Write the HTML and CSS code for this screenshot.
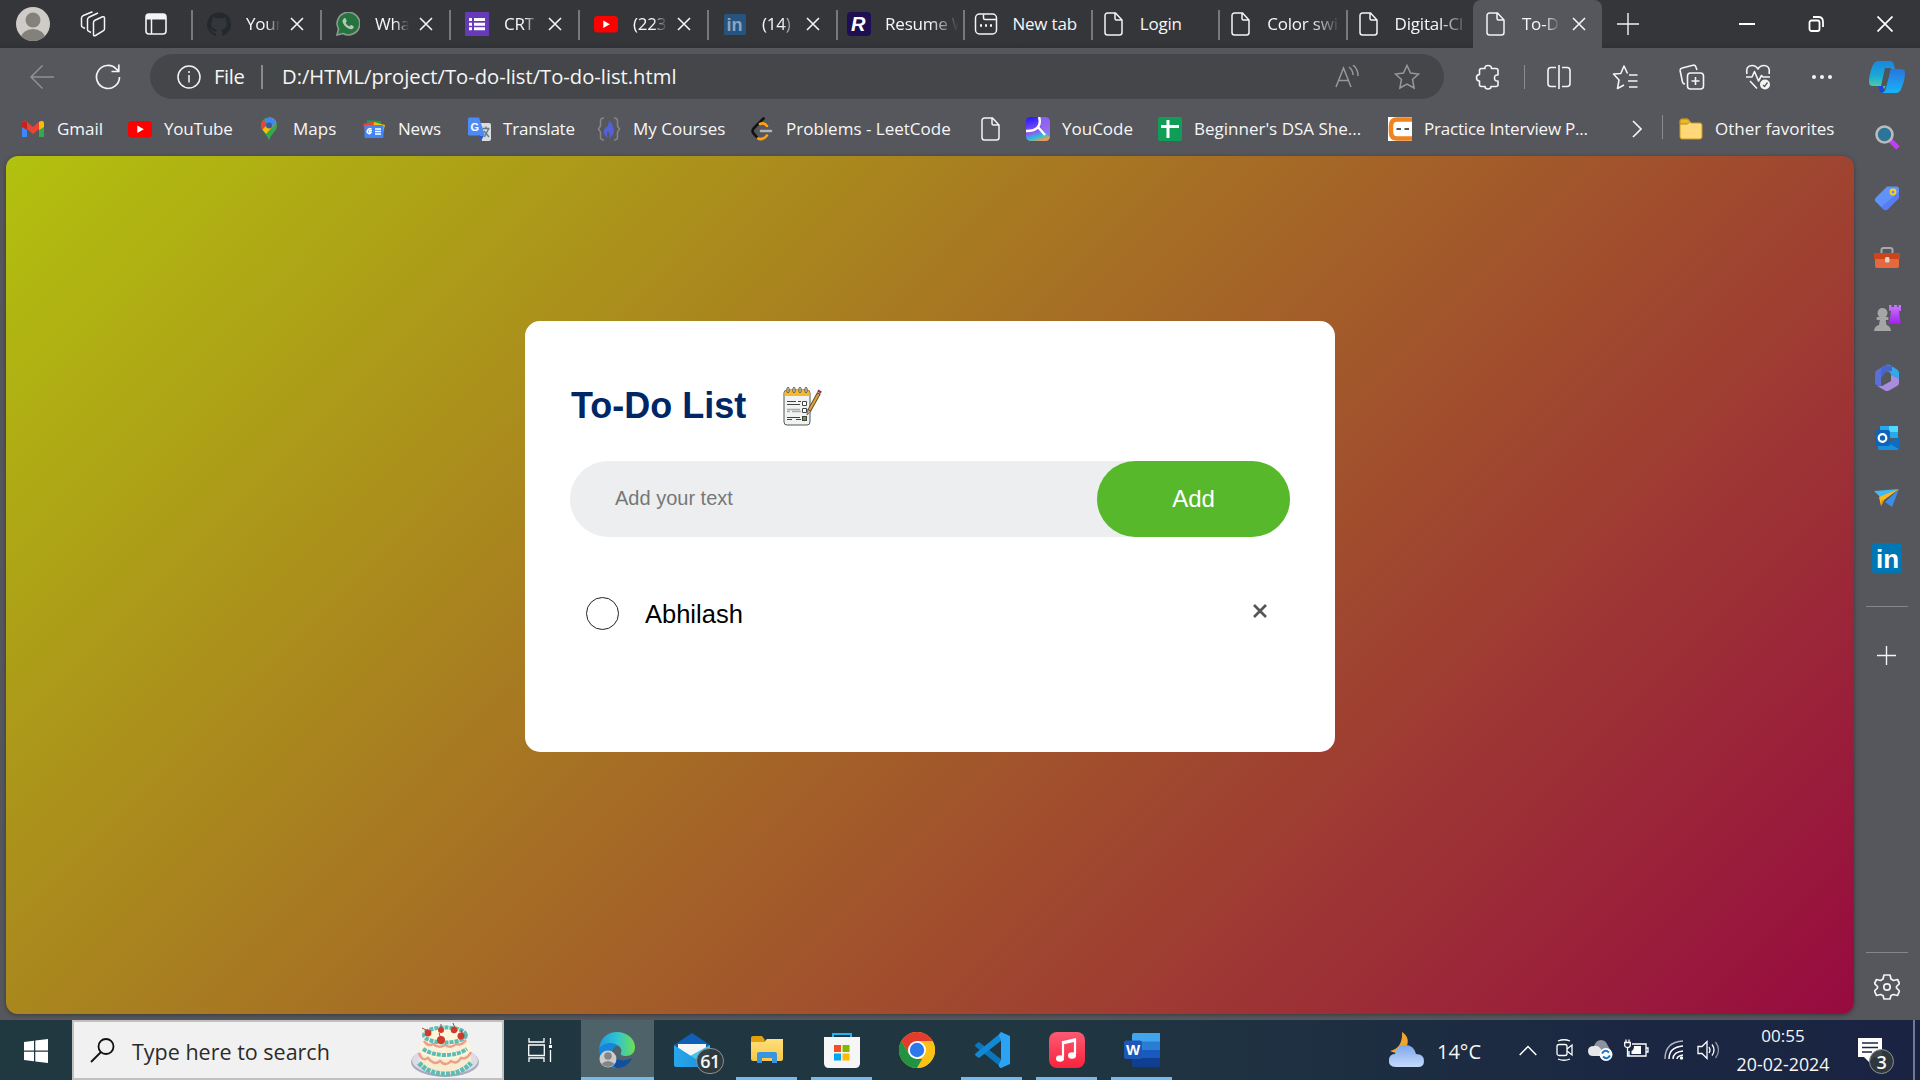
FILE: index.html
```
<!DOCTYPE html>
<html lang="en">
<head>
<meta charset="utf-8">
<title>To-Do List</title>
<link rel="stylesheet" href="styles.css">
</head>
<body>
<svg class="defs" width="0" height="0">
  <defs>
    <symbol id="x" viewBox="0 0 14 14"><path d="M1 1l12 12M13 1L1 13" fill="none" stroke="#f4f4f4" stroke-width="1.6"/></symbol>
    <symbol id="doc" viewBox="0 0 24 24"><path d="M5.500 1h8L20 8v12.500a2.500 2.500 0 0 1-2.500 2.500h-12A2.500 2.500 0 0 1 3 20.500v-17A2.500 2.500 0 0 1 5.500 1zM13 1v5.500A1.500 1.500 0 0 0 14.500 8H20" fill="none" stroke="#f4f4f4" stroke-width="1.500"/></symbol>
    <symbol id="yt" viewBox="0 0 24 24"><rect y="4" width="24" height="16.500" rx="3.500" fill="#f00"/><path d="M9.300 8.500v7.500l6.500-3.700z" fill="#fff"/></symbol>
    <linearGradient id="gEdge" x1="0" x2="1"><stop offset="0" stop-color="#2099dc"/><stop offset=".5" stop-color="#2fc3d4"/><stop offset="1" stop-color="#6ee04c"/></linearGradient>
    <linearGradient id="gCopA" x1="0" y1="0" x2="0" y2="1"><stop offset="0" stop-color="#1b86e0"/><stop offset=".5" stop-color="#18a8d8"/><stop offset="1" stop-color="#5ed88f"/></linearGradient>
    <linearGradient id="gCopB" x1="0" y1="0" x2="0" y2="1"><stop offset="0" stop-color="#2b74dc"/><stop offset="1" stop-color="#15b4fb"/></linearGradient>
    <linearGradient id="gYou" x1=".3" y1="0" x2=".6" y2="1"><stop offset="0" stop-color="#2c1cff"/><stop offset=".6" stop-color="#8b5cf0"/><stop offset=".8" stop-color="#25bfe0"/><stop offset="1" stop-color="#f09a50"/></linearGradient>
    <linearGradient id="gCloud" x1="0" y1="0" x2="0" y2="1"><stop offset="0" stop-color="#7ea6ea"/><stop offset="1" stop-color="#c5dafc"/></linearGradient>
    <linearGradient id="gMusic" x1="0" y1="0" x2="0" y2="1"><stop offset="0" stop-color="#fb5a74"/><stop offset="1" stop-color="#fa233b"/></linearGradient>
    <linearGradient id="gMail" x1="0" x2="1"><stop offset="0" stop-color="#29a7ea"/><stop offset="1" stop-color="#1b8fe0"/></linearGradient>
    <linearGradient id="gPurple" x1="0" y1="0" x2="0" y2="1"><stop offset="0" stop-color="#c77bf5"/><stop offset="1" stop-color="#a41cf0"/></linearGradient>
    <linearGradient id="gFold" x1="0" y1="0" x2="0" y2="1"><stop offset="0" stop-color="#ffe07a"/><stop offset="1" stop-color="#f8c747"/></linearGradient>
  </defs>
</svg>

<header class="tabstrip">
  <svg class="avatar" width="34" height="34" viewBox="0 0 34 34"><defs><clipPath id="cAv"><circle cx="17" cy="17" r="17"/></clipPath></defs><g clip-path="url(#cAv)"><rect width="34" height="34" fill="#cfccc8"/><circle cx="17" cy="13" r="7.500" fill="#84807c"/><ellipse cx="17" cy="31" rx="12" ry="9" fill="#84807c"/></g></svg>
  <svg class="workspaces" width="26" height="26" viewBox="0 0 26 26" fill="none" stroke="#f4f4f4" stroke-width="1.500" stroke-linejoin="round"><path d="M13.500 11.500q0-1.500 1.500-2.200l7.500-3.500q2-.6 2 1.500v10.500q0 1.300-1 1.800l-8 4.900q-2 1-2-1zM11 21.500l-2.500-1.300q-1-.5-1-1.700V8.500q0-1.500 1.300-2.200L18 2M5 17.500l-2.500-1.300q-1-.5-1-1.700V7q0-1.500 1.300-2.200L12.500.8"/></svg>
  <svg class="vtabs" width="22" height="22" viewBox="0 0 22 22"><rect x="1" y="1" width="20" height="20" rx="3" fill="none" stroke="#f4f4f4" stroke-width="1.600"/><path d="M1 6.500V4a3 3 0 0 1 3-3h14a3 3 0 0 1 3 3v2.500z" fill="#f4f4f4"/><path d="M6.500 6v15" stroke="#f4f4f4" stroke-width="1.500"/></svg>
  <nav class="tabs">
    <div class="tab"><svg class="fav" viewBox="0 0 24 24"><path fill="#24292e" d="M12 .3a12 12 0 0 0-3.800 23.400c.6.100.8-.3.800-.6v-2c-3.300.7-4-1.600-4-1.600-.6-1.400-1.400-1.800-1.400-1.800-1-.7.100-.7.100-.7 1.200 0 1.900 1.200 1.900 1.200 1 1.800 2.800 1.300 3.500 1 0-.8.400-1.300.7-1.600-2.700-.3-5.500-1.300-5.500-6 0-1.200.5-2.300 1.300-3.100-.2-.4-.6-1.600 0-3.200 0 0 1-.3 3.400 1.200a11.500 11.500 0 0 1 6 0c2.300-1.500 3.300-1.200 3.300-1.200.7 1.600.2 2.800.1 3.200.8.800 1.300 1.900 1.300 3.200 0 4.600-2.800 5.600-5.500 5.900.5.400.9 1 .9 2.200v3.300c0 .3.100.7.800.6A12 12 0 0 0 12 .3"/></svg><span class="label">Your s</span><svg class="close"><use href="#x"/></svg></div>
    <div class="tab"><svg class="fav" viewBox="0 0 24 24"><path d="M1 23l1.500-6A11.300 11.300 0 1 1 7 21.500z" fill="#23743d" stroke="#8b9a8d" stroke-width="1.600"/><path d="M8 6.500c1-.8 1.600-.3 2 .8l.7 1.700c.2.700-1 1.500-.9 1.900.8 1.700 2 2.700 3.700 3.400.5.100 1.100-1.500 1.800-1.200l2.200 1.100c.8.500-.2 2.800-2 3-3 .4-8.600-4-9-8 0-1.200.7-2 1.500-2.700z" fill="#b9c4bb"/></svg><span class="label">What</span><svg class="close"><use href="#x"/></svg></div>
    <div class="tab"><svg class="fav" viewBox="0 0 24 24"><rect width="24" height="24" rx="1" fill="#673ab7"/><path d="M4 6h3v3H4zM9 6h11v3H9zM4 10.700h3v3H4zM9 10.700h11v3H9zM4 15.300h3v3H4zM9 15.300h11v3H9z" fill="#fff"/></svg><span class="label">CRT P</span><svg class="close"><use href="#x"/></svg></div>
    <div class="tab"><svg class="fav"><use href="#yt"/></svg><span class="label">(223)</span><svg class="close"><use href="#x"/></svg></div>
    <div class="tab"><svg class="fav" viewBox="0 0 24 24"><rect x="1" y="2" width="22" height="21" rx="1.500" fill="#27537f"/><text x="3.500" y="19" class="lin" font-size="18" fill="#8ba6be">in</text></svg><span class="label">(14)</span><svg class="close"><use href="#x"/></svg></div>
    <div class="tab slim"><svg class="fav" viewBox="0 0 24 24"><rect width="24" height="24" rx="4" fill="#1d0f52"/><text x="4" y="19" font-size="20" font-weight="bold" font-style="italic" fill="#fff" class="lin">R</text></svg><span class="label">Resume W</span></div>
    <div class="tab slim"><svg class="fav" viewBox="0 0 24 24" fill="none" stroke="#f4f4f4" stroke-width="1.500"><rect x="1.500" y="2" width="21" height="20" rx="4"/><path d="M9.500 2.500V6Q9.500 7.500 11 7.500h11"/><path d="M6 13.500h2M11 13.500h2M16 13.500h2" stroke-width="2.400"/></svg><span class="label nofade">New tab</span></div>
    <div class="tab slim"><svg class="fav"><use href="#doc"/></svg><span class="label nofade">Login</span></div>
    <div class="tab slim"><svg class="fav"><use href="#doc"/></svg><span class="label">Color swi</span></div>
    <div class="tab slim"><svg class="fav"><use href="#doc"/></svg><span class="label">Digital-Cl</span></div>
    <div class="tab slim active"><svg class="fav"><use href="#doc"/></svg><span class="label short">To-Do</span><svg class="close"><use href="#x"/></svg></div>
  </nav>
  <svg class="newtab" width="22" height="22" viewBox="0 0 22 22"><path d="M11 0v22M0 11h22" stroke="#f4f4f4" stroke-width="1.400"/></svg>
  <div class="winctl">
    <svg width="16" height="16" viewBox="0 0 16 16"><path d="M0 8h16" stroke="#fff" stroke-width="2"/></svg>
    <svg width="16" height="16" viewBox="0 0 16 16" fill="none" stroke="#fff" stroke-width="1.800"><rect x="1.500" y="4.500" width="10" height="10.500" rx="2"/><path d="M5 1h5.500Q15 1 15 6v5"/></svg>
    <svg width="16" height="16" viewBox="0 0 16 16"><path d="M.5.500l15 15M15.500.5l-15 15" stroke="#fff" stroke-width="1.700"/></svg>
  </div>
</header>

<div class="browser">
  <div class="left">
    <div class="toolbar">
      <svg class="back" width="24" height="26" viewBox="0 0 24 26" fill="none" stroke="#909194" stroke-width="1.500"><path d="M24 13H1M12.500 1.500L1 13l11.500 11.500"/></svg>
      <svg class="reload" width="26" height="26" viewBox="0 0 26 26" fill="none" stroke="#f4f4f4" stroke-width="1.700"><path d="M24.500 13A11.500 11.500 0 1 1 21.500 5.200L23.500 7M23.800.5V7.500H16.500"/></svg>
      <div class="address">
        <svg width="24" height="24" viewBox="0 0 24 24" fill="none" stroke="#f4f4f4" stroke-width="1.500"><circle cx="12" cy="12" r="11"/><path d="M12 10v7.500M12 6v2"/></svg>
        <span class="scheme">File</span><i class="bar"></i><span class="url">D:/HTML/project/To-do-list/To-do-list.html</span>
        <svg class="aloud" width="24" height="24" viewBox="0 0 24 24" fill="none" stroke="#97989b" stroke-width="1.500"><path d="M1 22L8.500 3 16 22M3.500 15.500h10M14 2q4 3 4 8M18 0q5 4 5 11"/></svg>
        <svg class="star" width="26" height="26" viewBox="0 0 26 26" fill="none" stroke="#97989b" stroke-width="1.500"><path d="M13 1.500l3.500 7.500 8 1-6 5.500 1.600 8.500L13 20l-7.100 4L7.500 15.500l-6-5.500 8-1z"/></svg>
      </div>
      <div class="actions">
        <svg width="26" height="26" viewBox="0 0 26 26" fill="none" stroke="#f4f4f4" stroke-width="1.600" stroke-linejoin="round"><path d="M6.500 4.500H10Q9.500 1.500 13 1.500T16.500 4.500H21Q23 4.500 23 6.500v4.500Q19.500 10.500 19.500 14t3.500 3v3.500q0 2-2 2H16q0 2.500-3 2.500t-3-2.500H6.500Q4.500 22.500 4.500 20.500v-3.500Q1.500 17 1.500 13.800T4.500 10.500V6.500q0-2 2-2z"/></svg>
        <i class="bar"></i>
        <svg width="24" height="26" viewBox="0 0 24 26" fill="none" stroke="#f4f4f4" stroke-width="1.600"><path d="M9 3.500H4Q1 3.500 1 6.500v13q0 3 3 3h5M12 1v24M15 3.500h5q3 0 3 3v13q0 3-3 3h-5"/></svg>
        <svg width="26" height="26" viewBox="0 0 26 26" fill="none" stroke="#f4f4f4" stroke-width="1.600" stroke-linejoin="round"><path d="M15.500 9.500L12 2 8.800 9.500 1.500 10l5.500 6-1.500 8.500L12 21M17 11h8.500M16 17h9.500M17 23h8.500"/></svg>
        <svg width="26" height="26" viewBox="0 0 26 26" fill="none" stroke="#f4f4f4" stroke-width="1.600"><rect x="8.500" y="9" width="16" height="16" rx="3"/><path d="M16.500 13v8M12.500 17h8M6 20q-2 0-2.500-2L1.200 7q-.4-2.500 2-3L14 1.200q2.500-.4 3 2L18 6"/></svg>
        <svg width="26" height="26" viewBox="0 0 26 26" fill="none" stroke="#f4f4f4" stroke-width="1.600" stroke-linejoin="round"><path d="M1.800 10Q.5 1.500 7 1.500q4 0 6 3.500 2-3.500 6-3.500 6.500 0 5.200 8.500M1 13h6l2.500-5.500 4 9.500 3-5.500L18 13h7M5 17l7 7.500"/><circle cx="20" cy="20.500" r="5" fill="#f4f4f4" stroke="none"/><path d="M18 21l1.500 1.500 3-4" stroke="#56575c" stroke-width="1.300"/></svg>
        <svg width="22" height="26" viewBox="0 0 22 26" fill="#f4f4f4"><circle cx="3" cy="13" r="2"/><circle cx="11" cy="13" r="2"/><circle cx="19" cy="13" r="2"/></svg>
      </div>
    </div>

    <nav class="bookmarks">
      <a class="bm b1"><svg viewBox="0 0 24 24"><path d="M1 5v15h5V12z" fill="#4285f4"/><path d="M23 5v15h-5V12z" fill="#34a853"/><path d="M1 7q0-4 4-3l7 6 7-6q4-1 4 3l-5 5-6 5-6-5z" fill="#ea4335"/><path d="M18 5q5-3 5 2v3l-5 3z" fill="#fbbc04"/><path d="M6 5Q1 3 1 7v3l5 3z" fill="#c5221f"/></svg><span>Gmail</span></a>
      <a class="bm b2"><svg><use href="#yt"/></svg><span>YouTube</span></a>
      <a class="bm b3"><svg viewBox="0 0 24 24"><path d="M12 .5a8 8 0 0 0-8 8c0 6 5.500 7 8 15 2.500-8 8-9 8-15a8 8 0 0 0-8-8z" fill="#34a853"/><path d="M12 .5a8 8 0 0 1 7.400 5L9 17l-3.500-4.500L15 3z" fill="#fbbc04"/><path d="M12 .5q5 0 7.400 5L14 11 7 2.500z" fill="#4285f4"/><path d="M6 3L10 7 5 12.500Q2.500 7 6 3z" fill="#ea4335"/><circle cx="12" cy="8.500" r="3" fill="#3c5a9c"/></svg><span>Maps</span></a>
      <a class="bm b4"><svg viewBox="0 0 24 24"><path d="M5 3l14 1v8H5z" fill="#0f9d58"/><path d="M1 7l12-3 3 10H3z" fill="#ea4335"/><path d="M12 5l11 3-3 12H10z" fill="#fbbc04"/><rect x="2.500" y="8" width="19" height="13" rx="1.500" fill="#4285f4"/><path d="M10 13.500H7.500v2H9Q8 17.500 6 16.200T6.500 12Q8 11 9.500 12M13 12h6M13 14.500h6M13 17h6" stroke="#fff" stroke-width="1.500" fill="none"/></svg><span>News</span></a>
      <a class="bm b5"><svg viewBox="0 0 24 24"><path d="M8 6h14q2 0 2 2v14q0 2-2 2h-7z" fill="#dcdcdc"/><path d="M1 2Q1 .5 2.500.5H12l6 18H2.500Q1 18.500 1 17z" fill="#4c8bf5"/><path d="M11 18.500h6L14 24z" fill="#2a56c6"/><text x="3.500" y="13.500" font-size="11" font-weight="bold" fill="#fff" class="lin">G</text><path d="M15.500 11.500h7M19 9.500v2M17 14l5 6M21.500 12l-4 8" stroke="#607988" stroke-width="1.300"/></svg><span>Translate</span></a>
      <a class="bm b6"><svg viewBox="0 0 24 24"><path d="M7 1Q3.500 1 3.500 4v5L1.500 12l2 3v5q0 3 3.500 3M17 1q3.500 0 3.500 3v5l2 3-2 3v5q0 3-3.500 3" fill="none" stroke="#85868a" stroke-width="1.500"/><path d="M12 3q6 7 4.500 14L12 22q1.500-5-1-8-2 3 0 7-5-3-4-8l2-4v2q3-3 3-8z" fill="#5360d8"/></svg><span>My Courses</span></a>
      <a class="bm b7"><svg viewBox="0 0 24 24" fill="none" stroke-linecap="round" stroke-width="2.600"><path d="M13.500 1.500L4 11q-3 3 0 6l4 4.500" stroke="#111"/><path d="M10 7q4-2 7 2M8 21.500q5 2 9-3" stroke="#ffa116"/><path d="M11 14h10" stroke="#b3b3b3"/></svg><span>Problems - LeetCode</span></a>
      <a class="bm b8"><svg><use href="#doc"/></svg></a>
      <a class="bm b9"><svg viewBox="0 0 24 24"><rect width="24" height="24" rx="4.500" fill="url(#gYou)"/><path d="M13 0h6q5 0 5 5v15L15 11z" fill="#9b6cf0" opacity=".8"/><path d="M13 0q2 6-1 10T0 14M12 10l7 8" fill="none" stroke="#fff" stroke-width="2.500"/></svg><span>YouCode</span></a>
      <a class="bm b10"><svg viewBox="0 0 24 24"><rect width="24" height="24" rx="2" fill="#0f9d58"/><path d="M10 3v18M3 9.500h18" stroke="#fff" stroke-width="3"/></svg><span>Beginner's DSA She...</span></a>
      <a class="bm b11"><svg viewBox="0 0 24 24"><rect width="24" height="24" fill="#fff"/><path d="M24 2.500H9Q3 2.500 3 9v6q0 6.500 6 6.500h15" fill="none" stroke="#f0831e" stroke-width="4.500"/><rect x="6" y="7" width="18" height="10" rx="3" fill="#fff"/><path d="M8.500 12h4.500M16.500 12H21" stroke="#555" stroke-width="2.200"/></svg><span>Practice Interview P...</span></a>
      <svg class="more" width="10" height="18" viewBox="0 0 10 18"><path d="M1 1l8 8-8 8" fill="none" stroke="#f4f4f4" stroke-width="1.700"/></svg>
      <i class="bar"></i>
      <a class="bm b12"><svg viewBox="0 0 24 24"><path d="M1 4Q1 2 3 2h6l3 4h9q2 0 2 2v12q0 2-2 2H3q-2 0-2-2z" fill="#ffd978" stroke="#c99a1c" stroke-width="1"/><path d="M1 7V4Q1 2 3 2h5.500L11 4.500 8.500 7z" fill="#eab82a" stroke="#b98a12"/></svg><span>Other favorites</span></a>
    </nav>

    <main class="page">
      <section class="todo">
        <h1>To-Do List
          <svg width="40" height="39" viewBox="0 0 40 39"><rect x="1" y="3" width="26" height="35" rx="3" fill="#f1f2f2" stroke="#555" stroke-width="1"/><path d="M1.500 9V5.500Q1.500 3 4 3h20q2.500 0 2.500 2.500V9z" fill="#f6b92a"/><g fill="#fff" stroke="#444"><rect x="4" y=".5" width="2" height="5" rx="1"/><rect x="10" y=".5" width="2" height="5" rx="1"/><rect x="16" y=".5" width="2" height="5" rx="1"/><rect x="22" y=".5" width="2" height="5" rx="1"/></g><path d="M4 14.500h9m2 0h3M4 17.500h13M4 30.500h13M4 32.500h5m4 0h5" stroke="#444" stroke-width="1"/><path d="M4 22.500h13M4 24.500h3m2 0h9" stroke="#aaa" stroke-width="1.500"/><path d="M19.500 14.500h4v4h-4zM19.500 21.500h4v4h-4z" fill="#fff" stroke="#444"/><rect x="19.500" y="29.500" width="4" height="4" fill="#5da519" stroke="#444"/><path d="M26 24L36 6" stroke="#5b4a2a" stroke-width="4"/><path d="M26.500 23L35.500 7" stroke="#d9a23c" stroke-width="2.200"/><path d="M36 5.500l1-2" stroke="#8f3a42" stroke-width="4"/><path d="M24 28l.8-5.500 3 2z" fill="#d6a6a0" stroke="#555" stroke-width=".7"/></svg>
        </h1>
        <div class="row"><span class="field">Add your text</span><button>Add</button></div>
        <ul><li><i class="ring"></i><span>Abhilash</span><svg width="14" height="14" viewBox="0 0 14 14"><path d="M1 1l12 12M13 1L1 13" stroke="#555" stroke-width="2.700"/></svg></li></ul>
      </section>
    </main>
  </div>

  <aside class="side">
    <div class="cell top"><svg width="38" height="34" viewBox="0 0 38 34"><path d="M10 1h12q3 0 4 4l1 4h-5l-5 18q-1 3-4 3l2-4H5q-4 0-4-4 0-6 3-15 2-6 6-6z" fill="url(#gCopA)"/><path d="M10 26h5l2 7h-2q-3 0-4-4z" fill="#1c46d8"/><path d="M22 9h11q4 0 4 4 0 6-3 14-2 6-6 6H14q3-1 4-5l3-12z" fill="url(#gCopB)"/><path d="M17 8h6l-5 18h-5z" fill="#4d5659"/></svg></div>
    <div class="cell second"><svg width="28" height="28" viewBox="0 0 28 28"><path d="M17 17l8 8" stroke="#c43cf5" stroke-width="5"/><circle cx="11.500" cy="11.500" r="8" fill="#2d7598" stroke="#bbb" stroke-width="2.600"/></svg></div>
    <div class="cell"><svg width="26" height="26" viewBox="0 0 26 26"><path d="M13 1.500h10Q25 1.500 25 4v9L13.500 24.500q-2 1.500-4 0l-8-8q-1.500-1.500 0-3.500z" fill="#6093fa"/><path d="M25 7v6L13.500 24.500q-2 1.500-4 0L7 22z" fill="#526cf0" opacity=".6"/><circle cx="19" cy="7" r="2.500" fill="none" stroke="#ffd117" stroke-width="1.800"/></svg></div>
    <div class="cell"><svg width="28" height="24" viewBox="0 0 28 24"><path d="M8.500 8V4Q8.500 2 10.500 2h7q2 0 2 2v4" fill="none" stroke="#a8a8a8" stroke-width="2"/><path d="M2 10h24v10q0 2-2 2H4q-2 0-2-2z" fill="#e5683e"/><path d="M1 7h26v6H1z" fill="#cc4518"/><rect x="12" y="11" width="4.500" height="5.500" rx="1.500" fill="#d5d5d5"/></svg></div>
    <div class="cell"><svg width="28" height="28" viewBox="0 0 28 28"><path d="M16 1h2.500v2H21V1h3v2h1.500V1H28v6h-2l1 9q1 1 1 4H15l2-5 1-8h-2z" fill="url(#gPurple)"/><g fill="#a6a6a6"><circle cx="9.500" cy="9" r="5"/><rect x="3.500" y="13" width="12" height="3" rx="1"/><path d="M7 15h5.500l1 6q4 1 4.500 6H1q.5-5 5-6z"/></g></svg></div>
    <div class="cell"><svg width="26" height="28" viewBox="0 0 26 28"><path d="M12 1L3 6Q1 7 1 9.500v9q0 2 2 3l4 1.500V11q0-3 2.500-4z" fill="#5a70d8"/><path d="M12 1q2-1 4 0l7 4.500q2 1 2 3.500v7l-8-5q0-3-4-3.500H8z" fill="#35a6e8"/><path d="M25 15v4q0 2-2 3l-8 4.500q-2 1-4 0L3 22q4 1 7-1l7-4V11z" fill="#a98be0"/><path d="M12 1L7 5v9l5-6 6-1V2z" fill="#4766cc"/><path d="M13 9.500l4 2.300v4.400l-4 2.300-4-2.300v-4.400z" fill="#56575c"/></svg></div>
    <div class="cell"><svg width="26" height="26" viewBox="0 0 26 26"><path d="M6 1h18v12H6z" fill="#28a8ea"/><path d="M15 1h9v6h-9z" fill="#50d9ff"/><path d="M4 12l11 6 10-6v11q0 2-2 2H6q-2 0-2-2z" fill="#1490df"/><path d="M14 18l11-6v12z" fill="#0f6cbf"/><rect x="1" y="5" width="15" height="16" rx="2" fill="#0f64b8"/><circle cx="8.500" cy="13" r="3.800" fill="none" stroke="#fff" stroke-width="2.200"/></svg></div>
    <div class="cell"><svg width="28" height="22" viewBox="0 0 28 22"><path d="M1 4l25-2-18 9z" fill="#45b8ee"/><path d="M26 2L12 15l7 5z" fill="#3b8ee8"/><path d="M6 10L26 2 11 13l-3 6z" fill="#ffb81c"/><path d="M9 13l2 1-3 5z" fill="#d88900"/></svg></div>
    <div class="cell"><svg width="30" height="30" viewBox="0 0 30 30"><rect width="30" height="30" rx="3" fill="#0077b5"/><text x="4" y="25" font-size="26" font-weight="bold" fill="#fff" class="lin">in</text></svg></div>
    <hr class="first">
    <svg class="plus" width="19" height="19" viewBox="0 0 19 19"><path d="M9.500 0v19M0 9.500h19" stroke="#f4f4f4" stroke-width="1.400"/></svg>
    <hr class="last">
    <svg class="gear" width="26" height="28" viewBox="0 0 26 28" fill="none" stroke="#f4f4f4" stroke-width="1.700" stroke-linejoin="round"><path d="M10 2h6l1 4 2.500 1.500 4-1 2 4-3 3v1.500l3 3-2 4.500-4-1L17 22.500 16 26h-6l-1-3.500L6.500 21.500l-4 1-2-4.500 3-3v-1.500l-3-3 2-4 4 1L9 6z"/><circle cx="13" cy="14" r="3.200"/></svg>
  </aside>
</div>

<footer class="taskbar">
  <div class="tile start"><svg width="24" height="24" viewBox="0 0 24 24" fill="#fff"><path d="M0 3l10-1.200V11.500H0zM11.300 1.600L24 0v11.500H11.300zM0 12.800h10v9.500L0 21zM11.300 12.800H24V24l-12.700-1.600z"/></svg></div>
  <div class="search">
    <svg width="25" height="25" viewBox="0 0 25 25" fill="none" stroke="#111" stroke-width="1.800"><circle cx="16" cy="8.500" r="7.500"/><path d="M11 14L1 24"/></svg>
    <span>Type here to search</span>
    <svg class="cake" width="70" height="55" viewBox="0 0 70 55">
      <ellipse cx="35" cy="39" rx="34" ry="15" fill="#aaa9bd"/><ellipse cx="35" cy="37.500" rx="33" ry="14" fill="#dcdbe6"/>
      <path d="M9 24v17q10 11 26 11t26-11V24z" fill="#f8ecd0"/><ellipse cx="35" cy="25" rx="26" ry="11" fill="#fdf4dc"/>
      <path d="M9 40q10 11 26 11t26-11" fill="none" stroke="#5dbcb5" stroke-width="5" stroke-dasharray="4 1"/>
      <path d="M9 30q3 9 9 5 6 8 12 3 6 6 11 0 6 4 10-3 6 2 10-6" fill="none" stroke="#ee9f8c" stroke-width="2.500"/>
      <path d="M14 10v17q9 6 21 6t21-6V10z" fill="#fcf1d8"/><path d="M13 26q9 6 22 6t22-6" fill="none" stroke="#5dbcb5" stroke-width="4" stroke-dasharray="4 1"/>
      <path d="M14 18q4 6 9 3 6 5 12 1 6 4 11-1 6 2 10-4" fill="none" stroke="#ee9f8c" stroke-width="2.400"/>
      <ellipse cx="35" cy="12" rx="21" ry="7.500" fill="#fdf4dc" stroke="#5dbcb5" stroke-width="4" stroke-dasharray="4 1"/>
      <g stroke="#a34436" stroke-width="1" fill="none"><path d="M12 5l6 3M31 1v5M43 0l2 5M51 7l2 5M29 10l2 6"/></g>
      <g fill="#cc3b2c"><circle cx="18" cy="10" r="3.400"/><circle cx="31" cy="7" r="3"/><circle cx="44" cy="7" r="3.200"/><circle cx="51" cy="13" r="3.500"/><circle cx="31" cy="17" r="4"/></g>
    </svg>
  </div>
  <div class="tile view"><svg width="24" height="24" viewBox="0 0 24 24" fill="none" stroke="#fff" stroke-width="1.300"><path d="M1 0v4h15V0M1 24v-4h15v4M.7 7h15.600v10.500H.7zM22.500 0v6M22.500 12v12"/><path d="M22.500 7v3" stroke-width="3"/></svg></div>
  <div class="tile edge on"><svg width="38" height="38" viewBox="0 0 38 38"><path d="M1 17C3 6 10 1 19 1c10 0 18 7 18 15 0 6-4 9-9 9-4 0-6-1-5-3 3-8-10-13-22-5z" fill="url(#gEdge)"/><path d="M1 18C5 11 16 10 20 15c-8 0-8 14 4 18-2 3-5 4-7 4C8 36 1 29 1 18z" fill="#1586d8"/><path d="M15 20c1 9 9 12 19 7-3 7-9 10-15 10-7-2-8-12-4-17z" fill="#124f9e"/><circle cx="10" cy="28" r="8.500" fill="#ccc"/><circle cx="10" cy="25" r="3.800" fill="#858585"/><path d="M3.500 33q6.500-6 13 0-6.500 6-13 0z" fill="#858585"/></svg></div>
  <div class="tile mail"><svg width="36" height="34" viewBox="0 0 36 34"><path d="M0 12L18 0l18 12-18 8z" fill="#0f5fb4"/><path d="M4 11h28v10L18 27 4 21z" fill="#f5f5f5"/><path d="M36 12v20q0 2-2 2L16 23z" fill="#42c8f0"/><path d="M0 12l34 22H2q-2 0-2-2z" fill="url(#gMail)"/></svg><b class="badge">61</b></div>
  <div class="tile on"><svg width="34" height="30" viewBox="0 0 34 30"><path d="M1 3q0-2 2-2h9l3 4-2 4H1z" fill="#e0a10c"/><path d="M1 7h13l3-3h16v20q0 2-2 2H3q-2 0-2-2z" fill="url(#gFold)"/><path d="M7 28V19q0-2 2-2h16q2 0 2 2v9h-5v-5H12v5z" fill="#3795e0"/></svg></div>
  <div class="tile on"><svg width="36" height="36" viewBox="0 0 36 36"><path d="M9 8V2h18v6" fill="none" stroke="#1fb4f0" stroke-width="2"/><path d="M0 5h36v26q0 5-5 5H5q-5 0-5-5z" fill="#f6f6f6"/><path d="M10 13h7v7h-7z" fill="#f25022"/><path d="M18.500 13h7v7h-7z" fill="#7fba00"/><path d="M10 21.500h7v7h-7z" fill="#00a4ef"/><path d="M18.500 21.500h7v7h-7z" fill="#ffb900"/></svg></div>
  <div class="tile"><svg width="36" height="36" viewBox="0 0 36 36"><circle cx="18" cy="18" r="18" fill="#fbc116"/><path d="M2.400 9A18 18 0 0 1 33.600 9H18L9 20z" fill="#e33b2e"/><path d="M2.400 9l8 13.500L18 27l7 0-7 9A18 18 0 0 1 2.400 9z" fill="#229342"/><path d="M18 9h15.600A18 18 0 0 1 18 36l8-14z" fill="#fbc116"/><circle cx="18" cy="18" r="9" fill="#fff"/><circle cx="18" cy="18" r="7.200" fill="#2b79ec"/></svg></div>
  <div class="tile on"><svg width="36" height="36" viewBox="0 0 36 36"><path d="M2 12l3-2L28 28v8L2 15q-2-1.500 0-3z" fill="#0b76bd"/><path d="M2 24l3 2L28 8V0L2 21q-2 1.500 0 3z" fill="#1289d4"/><path d="M27 0l9 4v28l-9 4q-3-1-2-4l2-4V8l-2-4q0-3 2-4z" fill="#2aa4f2"/></svg></div>
  <div class="tile on"><svg width="36" height="36" viewBox="0 0 36 36"><rect width="36" height="36" rx="8" fill="url(#gMusic)"/><path d="M14 9l13-3v3.500L14 12.500z" fill="#fff"/><path d="M14 9v16M26 7v15" stroke="#fff" stroke-width="2.200"/><ellipse cx="11" cy="26.500" rx="4" ry="3.300" fill="#fff"/><ellipse cx="23" cy="23.500" rx="4" ry="3.300" fill="#fff"/></svg></div>
  <div class="tile on"><svg width="36" height="34" viewBox="0 0 36 34"><path d="M8 2q0-2 2-2h26v9H8z" fill="#41a5ee"/><path d="M8 8.500h28V17H8z" fill="#2b7cd3"/><path d="M8 17h28v8H8z" fill="#185abd"/><path d="M8 25h28v7q0 2-2 2H10q-2 0-2-2z" fill="#103f91"/><rect y="7.500" width="18" height="18.500" rx="2" fill="#1d56b8"/><text x="2" y="22" font-size="15" font-weight="bold" fill="#fff" class="lin">W</text></svg></div>
  <div class="tray">
    <svg class="wx" width="37" height="36" viewBox="0 0 37 36"><path d="M14 0q9 6 4 16-5 8-16 3 13-3 12-19z" fill="#f2a52c"/><path d="M8 35q-8 0-7-8 1-5 6-5 1-9 10-9t11 9q8 0 8 7 0 6-6 6z" fill="url(#gCloud)"/></svg>
    <span class="temp">14°C</span>
    <svg class="up" width="18" height="11" viewBox="0 0 18 11"><path d="M.7 10L9 1.500 17.300 10" fill="none" stroke="#fff" stroke-width="1.500"/></svg>
    <svg class="cam" width="17" height="22" viewBox="0 0 17 22" fill="none" stroke="#fff" stroke-width="1.300"><rect x="1" y="5.500" width="10" height="11" rx="2"/><path d="M11 10l5-4v10l-5-4M2 2q6-2.500 12 0M2 20q6 2.500 12 0"/></svg>
    <svg class="cloud" width="25" height="22" viewBox="0 0 25 22"><path d="M6 7Q8 1 13 1t7 6l3 5H8z" fill="#8d929c"/><path d="M5 17q-5 0-5-5t6-5q5-1 8 5v5z" fill="#e4e6ea"/><circle cx="18" cy="15.500" r="6.500" fill="#fff"/><path d="M14 14.500q3-5 7-1M22 16.500q-3 5-7 1" stroke="#1478c8" stroke-width="2" fill="none"/></svg>
    <svg class="batt" width="25" height="22" viewBox="0 0 25 22"><path d="M8 5h14v12H5v-5M22 9h2v4h-2M3.500 9v8H5" fill="none" stroke="#fff" stroke-width="1.300"/><path d="M10 7h7v8H7.500v-3q2.500-1 2.500-5z" fill="#fff"/><path d="M.7 3.500h5.600v2.500q0 2.500-2.800 2.500T.7 6zM2 .5v3M5 .5v3" fill="none" stroke="#fff" stroke-width="1.300"/></svg>
    <svg class="wifi" width="20" height="22" viewBox="0 0 20 22" fill="none" stroke="#fff" stroke-width="1.400"><path d="M1 20Q1 3 19 2" opacity=".65"/><path d="M5 20Q5 8 19 7M9 20q0-7 10-8M13 20q0-3 6-4"/><circle cx="17.500" cy="19" r="1.700" fill="#fff" stroke="none"/></svg>
    <svg class="vol" width="23" height="22" viewBox="0 0 23 22" fill="none" stroke="#fff" stroke-width="1.300"><path d="M1 7.500h4l5-5v17l-5-5H1zM12 8q2 3 0 6M15 5.500q4 5.500 0 11"/><path d="M18.500 3q6 8 0 16" opacity=".5"/></svg>
    <div class="clock"><span>00:55</span><span class="date">20-02-2024</span></div>
    <div class="note"><svg width="24" height="24" viewBox="0 0 24 24"><path d="M0 0h24v19h-8l-5 5-5-5H0z" fill="#fff"/><path d="M4 5h16M4 9.500h16M4 14h10" stroke="#1b2742" stroke-width="1.400"/></svg><b class="badge">3</b></div>
    <i class="peek"></i>
  </div>
</footer>
</body>
</html>
```
FILE: styles.css
```
* { box-sizing: border-box; }
body {
  margin: 0;
  width: 1920px;
  height: 1080px;
  overflow: hidden;
  display: grid;
  grid-template-rows: 48px 972px 60px;
  background: #56575c;
  color: #f6f6f6;
  font: 17px/24px "Open Sans", "Noto Sans", sans-serif;
}
svg { display: block; flex: none; }
i { flex: none; }
.defs { position: absolute; }
.lin { font-family: "Liberation Sans", Arial, sans-serif; font-weight: bold; }

/* Tab strip */
.tabstrip { display: flex; align-items: center; background: linear-gradient(#35363a 85%, #303135); }
.avatar { margin-left: 16px; }
.workspaces { margin-left: 30px; }
.vtabs { margin-left: 39px; }
.tabs { display: flex; margin-left: 24px; height: 48px; }
.tab {
  width: 129px;
  display: flex;
  align-items: center;
  padding-left: 16px;
  background: linear-gradient(#77787b, #77787b) 0 10px / 2px 30px no-repeat;
}
.tab.slim { width: 127.400px; padding-left: 11px; }
.tab.active { width: 129px; background: #56575c; border-radius: 8px 8px 0 0; }
.fav { width: 24px; height: 24px; }
.label {
  width: 34px;
  margin-left: 15px;
  overflow: hidden;
  white-space: nowrap;
  letter-spacing: -.2px;
  -webkit-mask-image: linear-gradient(90deg, #000 60%, transparent);
  mask-image: linear-gradient(90deg, #000 60%, transparent);
}
.slim .label { width: 74px; margin-left: 14px; }
.slim .label.short { width: 38px; }
.slim .nofade { -webkit-mask-image: none; mask-image: none; }
.close { width: 14px; height: 14px; margin-left: 10px; }
.tab.active .close { margin-left: 12px; }
.newtab { margin-left: 15px; }
.winctl { display: flex; gap: 53px; margin-left: auto; margin-right: 27px; }

/* Browser frame */
.browser { display: flex; }
.left { width: 1854px; padding-left: 6px; }
.bar { width: 1px; background: #8a8b8e; }
.toolbar { height: 57px; display: flex; align-items: center; }
.back { margin-left: 24px; }
.reload { margin-left: 41px; }
.address {
  width: 1294px;
  height: 45px;
  margin-left: 29px;
  padding-left: 27px;
  border-radius: 23px;
  background: #454649;
  display: flex;
  align-items: center;
  font-size: 20.200px;
}
.scheme { width: 48px; padding-left: 13px; letter-spacing: -.4px; }
.address .bar, .actions .bar { height: 24px; }
.address .bar { margin-left: 12px; width: 2px; height: 24px; }
.url { width: 400px; margin-left: 19px; margin-top: -2px; white-space: nowrap; }
.scheme { margin-top: -2px; }
.aloud { margin-left: auto; }
.star { margin: 0 24px 0 35px; }
.actions { display: flex; align-items: center; margin-left: 31px; }
.actions > :nth-child(2) { margin-left: 23px; }
.actions > :nth-child(3) { margin-left: 22px; }
.actions > :nth-child(n+4) { margin-left: 41px; }
.actions > :nth-child(n+6) { margin-left: 40px; }

.bookmarks { height: 51px; display: flex; align-items: center; padding: 0 0 3px 15px; }
.bm { display: flex; align-items: center; white-space: nowrap; }
.bm svg { width: 24px; height: 24px; }
.bm span { margin: -1px 0 0 12px; }
.b1 { width: 107px; }
.b2 { width: 129px; }
.b3 { width: 105px; }
.b4 { width: 105px; }
.b5 { width: 130px; }
.b6 { width: 153px; }
.b7 { width: 229px; }
.b8 { width: 47px; }
.b9 { width: 132px; }
.b10 { width: 230px; }
.b11 { width: 244px; }
.b2, .b4, .b5, .b11 { letter-spacing: -.2px; }
.bookmarks .bar { height: 24px; margin: -4px 16px 0 20px; }

.page {
  width: 1848px;
  height: 858px;
  border-radius: 12px;
  background: linear-gradient(135deg, #b2c10e, #970a40);
  box-shadow: 0 1px 4px rgba(0, 0, 0, .35);
  padding-top: 165px;
  color: #000;
  font-family: "Liberation Sans", Arial, sans-serif;
}
.todo { width: 810px; height: 431px; margin-left: 519px; padding: 60px 45px; border-radius: 15px; background: #fff; }
h1 { display: flex; align-items: center; margin: 0; padding-left: 1px; height: 50px; font-size: 36px; color: #002765; }
h1 svg { margin-left: 37px; }
.row { display: flex; width: 720px; height: 76px; margin-top: 30px; border-radius: 38px; background: #edeef0; }
.field { flex: 1; padding-left: 45px; font-size: 20px; line-height: 74px; color: #777; }
button { width: 193px; border: 0; border-radius: 38px; background: #58b82c; color: #fff; font: 24px "Liberation Sans", Arial, sans-serif; }
ul { margin: 59px 0 0; padding: 0 0 0 16px; list-style: none; }
li { display: flex; align-items: center; height: 34px; font-size: 25.500px; }
.ring { width: 33px; height: 33px; border: 1.500px solid #222; border-radius: 50%; }
li span { margin-left: 26px; padding-top: 1px; }
li svg { margin: -4px 23px 0 auto; }

/* Edge sidebar */
.side { width: 66px; display: flex; flex-direction: column; align-items: center; }
.cell { width: 66px; height: 60px; display: grid; place-items: center; }
.cell.top { height: 58px; }
.cell.second { height: 62px; }
hr { width: 42px; height: 1px; margin: 0; border: 0; background: #85868a; }
hr.first { margin-top: 18px; }
.plus { margin: 39px 1px 0 0; }
hr.last { margin-top: auto; }
.gear { margin: 20px 0 19px; }

/* Taskbar */
.taskbar { display: flex; background: linear-gradient(90deg, #20383f, #203641 55%, #1b2742 85%, #1a2442); }
.tile { width: 75px; display: grid; place-items: center; position: relative; }
.tile.start { width: 72px; padding-top: 1px; }
.search {
  width: 432px;
  border: 2px solid #c0c0c0;
  background: #f1f1f1;
  color: #2b2b2b;
  display: flex;
  align-items: center;
  padding-left: 16px;
  font-size: 21.500px;
}
.search span { width: 202px; margin-left: 17px; padding-top: 3px; white-space: nowrap; }
.cake { margin-left: auto; margin-right: 22px; }
.tile.view { width: 77px; padding-right: 6px; }
.tile.edge { width: 73px; background: #4e6369; }
.tile.on { background-image: linear-gradient(#76b9ed, #76b9ed); background-position: 50% 100%; background-size: 61px 3px; background-repeat: no-repeat; }
.tile.edge.on { background-size: 73px 3px; }
.tile.edge svg { margin-right: 2px; }
.tile.mail svg { margin-top: -1px; }
.badge {
  position: absolute;
  left: 42px;
  top: 28px;
  width: 28px;
  height: 26px;
  border: 1px solid #8b9296;
  border-radius: 13px;
  background: #30393dee;
  font-size: 18px;
  line-height: 24px;
  font-weight: 600;
  text-align: center;
  letter-spacing: -.5px;
}
.tray { display: flex; align-items: center; margin-left: 209px; flex: 1; }
.temp { width: 46px; margin-left: 12px; padding-top: 3px; font-size: 20px; }
.up { margin-left: 36px; }
.cam { margin-left: 19px; }
.cloud { margin-left: 15px; }
.batt { margin-left: 11px; }
.wifi { margin-left: 15px; }
.vol { margin-left: 13px; }
.clock { display: flex; flex-direction: column; align-items: center; gap: 4px; width: 98px; margin-left: 14px; white-space: nowrap; }
.date { font-size: 17.800px; }
.note { position: relative; margin-left: 26px; }
.note .badge { left: 11px; top: 11px; width: 25px; height: 25px; }
.peek { width: 2px; height: 60px; margin-left: auto; margin-right: 5px; background: #707a90; }
```
